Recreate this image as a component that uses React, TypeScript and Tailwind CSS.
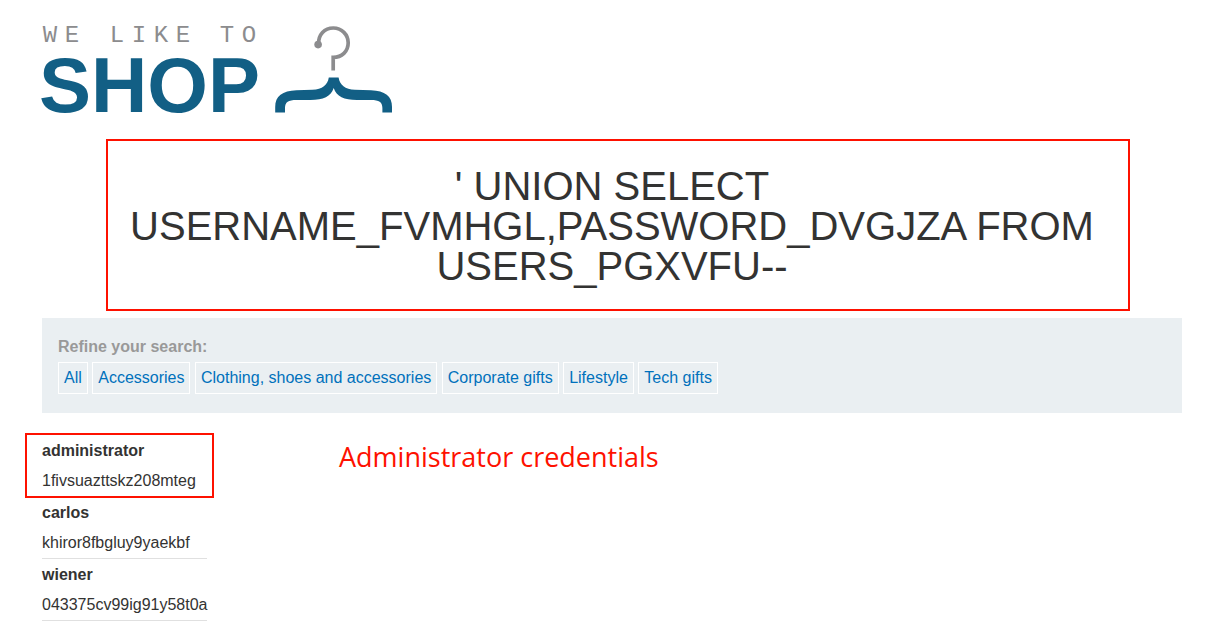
const categories = [
  "All",
  "Accessories",
  "Clothing, shoes and accessories",
  "Corporate gifts",
  "Lifestyle",
  "Tech gifts",
];

const results = [
  { name: "administrator", value: "1fivsuazttskz208mteg" },
  { name: "carlos", value: "khiror8fbgluy9yaekbf" },
  { name: "wiener", value: "043375cv99ig91y58t0a" },
];

function Logo() {
  return (
    <svg
      width="352"
      height="92"
      viewBox="42 24 352 92"
      className="block overflow-visible"
      role="img"
      aria-label="We like to shop"
    >
      <text
        x="50 72 94 117 139 161 183 205 227 249"
        y="42"
        textAnchor="middle"
        className="fill-[#8c8c8e] font-['Liberation_Mono',monospace] text-[24px]"
      >
        WE LIKE TO
      </text>
      <text
        x="39"
        y="112"
        className="fill-[#125f85] font-['Liberation_Sans',sans-serif] text-[78px] font-bold"
      >
        SHOP
      </text>
      <path
        d="M318.6 44 C318.2 34.5 324.5 28 333.3 28 C341.8 28 348.2 34.6 348.2 42.8 C348.2 51.6 341.8 57.4 333.2 57.4 V70.6"
        fill="none"
        stroke="#8c8c8e"
        strokeWidth="3.7"
      />
      <circle cx="318.1" cy="44.6" r="3.8" fill="#8c8c8e" />
      <path
        d="M328.8 77.4 H338.6 C339.8 85 345 89.2 355 89.8 L371 90.2 C385 90.8 392 96 392 107 V112.4 H382.4 V108 C382.4 102 379 100 371 100 H357 C344 100 336.5 96.5 333.7 88 C330.9 96.5 323.4 100 310.4 100 H296.4 C288.4 100 285 102 285 108 V112.4 H275.2 V107 C275.2 96 282.4 90.8 296.4 90.2 L312.4 89.8 C322.4 89.2 327.6 85 328.8 77.4 Z"
        fill="#125f85"
      />
    </svg>
  );
}

export default function App() {
  return (
    <div className="bg-white pt-6 pr-[35px] pb-4 pl-[42px] font-['Liberation_Sans',Arial,sans-serif] text-base text-[#333332]">
      <header>
        <a href="#home" className="block w-fit">
          <Logo />
        </a>
      </header>

      <main>
        <section className="relative mt-[23px] px-[70px] py-[27px] text-center">
          <h1 className="text-[40px] leading-10 uppercase">
            ' UNION SELECT USERNAME_FVMHGL,PASSWORD_DVGJZA FROM USERS_PGXVFU--
          </h1>
          <div className="pointer-events-none absolute top-0 right-[52px] bottom-0.5 left-16 border-2 border-[#fe1100]" />
        </section>

        <section className="mt-[5px] bg-[#eaeff2] px-4 pt-[17px] pb-[19px]">
          <h2 className="mb-[3px] leading-6 font-bold text-[#999999]">Refine your search:</h2>
          <nav>
            {categories.map((category) => (
              <span key={category}>
                <a
                  href="#filter"
                  className="inline-block border border-white px-[5px] align-top leading-[30px] text-[#0071bc]"
                >
                  {category}
                </a>{" "}
              </span>
            ))}
          </nav>
        </section>

        <section className="relative mt-[22px]">
          <table className="block w-fit text-left">
            <tbody className="block">
              {results.map((result) => (
                <tr key={result.name} className="block border-b border-[#e0e0e0]">
                  <th scope="row" className="block leading-[31px] font-bold">
                    {result.name}
                  </th>
                  <td className="block leading-[30px]">{result.value}</td>
                </tr>
              ))}
            </tbody>
          </table>
          <div className="pointer-events-none absolute -top-0.5 -left-[17px] h-[65px] w-[189px] border-2 border-[#fe1100]" />
          <p className="absolute top-1 left-[297px] font-['Open_Sans','Noto_Sans',sans-serif] text-[27px] leading-9 whitespace-nowrap text-[#fe1100]">
            Administrator credentials
          </p>
        </section>
      </main>
    </div>
  );
}
